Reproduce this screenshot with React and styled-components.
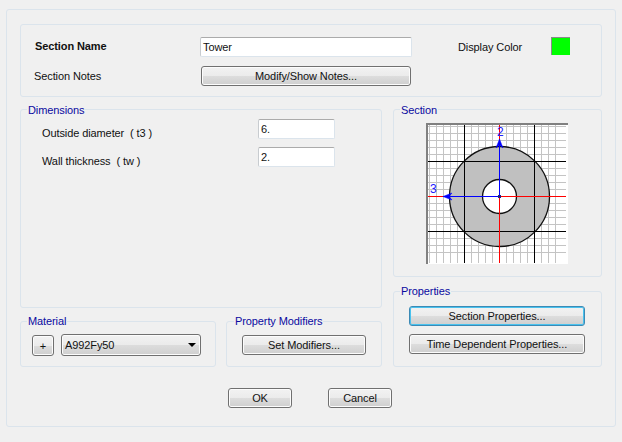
import styled, { createGlobalStyle } from "styled-components";

const Global = createGlobalStyle`
  html, body { margin: 0; padding: 0; background: #f0f0f0; }
  body { font-family: "Liberation Sans", Arial, sans-serif; font-size: 11px; letter-spacing: -0.1px; color: #111; }
`;

const Dialog = styled.div`
  width: 622px;
  height: 442px;
  box-sizing: border-box;
  padding: 9px 6px 15px 6px;
`;

const Frame = styled.div`
  height: 100%;
  box-sizing: border-box;
  border: 1px solid #dbe4ec;
  border-radius: 3px;
  padding: 14px 13px 0;
`;

const Group = styled.div`
  position: relative;
  box-sizing: border-box;
  border: 1px solid #dbe4ec;
  border-radius: 3px;
  height: ${(p) => p.$h}px;
  width: ${(p) => (p.$w ? `${p.$w}px` : "auto")};
`;

const Legend = styled.span`
  position: absolute;
  top: ${(p) => p.$top || -8}px;
  left: ${(p) => p.$left || 6}px;
  padding: 0 1px;
  background: #f0f0f0;
  color: #0a0aa0;
  line-height: 14px;
`;

const TopGroup = styled(Group)`
  display: grid;
  grid-template-columns: 166px 211px 1fr;
  grid-template-rows: 20px 20px;
  row-gap: 9px;
  align-items: center;
  padding: 12px 0 0 13px;
`;

const NameLabel = styled.label`
  font-weight: bold;
  padding-left: 1px;
  margin-bottom: 2px;
`;

const TextBox = styled.div`
  box-sizing: border-box;
  height: 20px;
  width: ${(p) => (p.$w ? `${p.$w}px` : "100%")};
  background: #fff;
  border: 1px solid #dbe4ec;
  border-top-color: #ababab;
  border-left-color: #c8ccd0;
  border-radius: 2px;
  padding: 0 2px;
  line-height: 18px;
`;

const ColorRow = styled.div`
  display: flex;
  align-items: center;
  padding-left: 47px;
  gap: 29px;
`;

const Swatch = styled.div`
  box-sizing: border-box;
  width: 19px;
  height: 18px;
  margin-bottom: 3px;
  background: #00ff00;
  border: 1px solid #8a8a8a;
  border-right: 0;
  border-bottom: 0;
`;

const Button = styled.button`
  box-sizing: border-box;
  width: ${(p) => (p.$w ? `${p.$w}px` : "100%")};
  height: ${(p) => p.$h || 20}px;
  padding: 0;
  font: inherit;
  letter-spacing: inherit;
  color: #111;
  border: 1px solid ${(p) => (p.$focus ? "#3c8ab5" : "#707070")};
  border-radius: 3px;
  box-shadow: inset 0 0 0 1px ${(p) => (p.$focus ? "#49c2ee" : "#fcfcfc")};
  background: linear-gradient(#f2f2f2 0%, #ebebeb 50%, #dddddd 50%, #cfcfcf 100%);
`;

const NotesButton = styled(Button)`
  margin-left: 1px;
`;

const Body = styled.div`
  display: grid;
  grid-template-columns: 362px 209px;
  column-gap: 11px;
  margin-top: 12px;
`;

const Column = styled.div`
  display: flex;
  flex-direction: column;
  gap: ${(p) => p.$gap}px;
`;

const DimGrid = styled.div`
  display: grid;
  grid-template-columns: 216px 77px;
  grid-auto-rows: 20px;
  row-gap: 8px;
  align-items: center;
  padding: 9px 0 0 21px;
`;

const DimLabel = styled.span`
  white-space: pre;
  margin-top: 7px;
`;

const BottomRow = styled.div`
  display: flex;
  gap: 10px;
`;

const MaterialBody = styled.div`
  display: flex;
  align-items: flex-end;
  gap: 7px;
  padding: 12px 0 0 11px;
`;

const Select = styled(Button)`
  display: flex;
  align-items: center;
  justify-content: space-between;
  padding: 0 4px 0 3px;
  height: 22px;
`;

const Caret = styled.span`
  width: 0;
  height: 0;
  border-left: 4px solid transparent;
  border-right: 4px solid transparent;
  border-top: 4px solid #000;
`;

const ModifierBody = styled.div`
  padding: 13px 0 0 15px;
`;

const PropBody = styled.div`
  display: flex;
  flex-direction: column;
  gap: 8px;
  padding: 14px 16px 0 15px;
`;

const SectionBody = styled.div`
  padding: 13px 0 0 32px;
`;

const Actions = styled.div`
  display: flex;
  gap: 36px;
  margin: 21px 0 0 208px;
`;

const minor = Array.from({ length: 19 }, (_, i) => 3 + i * 7);
const major = [38, 108];

function SectionDrawing() {
  return (
    <svg width="142" height="141" viewBox="0 0 142 141" style={{ display: "block" }} shapeRendering="crispEdges">
      <rect width="142" height="141" fill="#fff" />
      {minor.map((v) => (
        <g key={v} stroke="#c4c4c4">
          <line x1={v + 0.5} y1="2" x2={v + 0.5} y2="140" />
          <line x1="2" y1={v + 0.5} x2="140" y2={v + 0.5} />
        </g>
      ))}
      <g shapeRendering="auto" stroke="#111" strokeWidth="1.3">
        <circle cx="73.5" cy="73.5" r="50" fill="#c0c0c0" />
        <circle cx="73.5" cy="73.5" r="17" fill="#fff" />
      </g>
      <g stroke="#000">
        {major.map((v) => (
          <g key={v}>
            <line x1={v + 0.5} y1="2" x2={v + 0.5} y2="140" />
            <line x1="2" y1={v + 0.5} x2="140" y2={v + 0.5} />
          </g>
        ))}
      </g>
      <g stroke="#ff0000">
        <line x1="73.5" y1="2" x2="73.5" y2="140" />
        <line x1="2" y1="73.5" x2="140" y2="73.5" />
      </g>
      <g stroke="#0000ff">
        <line x1="73.5" y1="73" x2="73.5" y2="16" />
        <line x1="73" y1="73.5" x2="17" y2="73.5" />
      </g>
      <path d="M70 25 L73.5 16 L77 25 L73.5 22 Z M26 70 L17 73.5 L26 77 L23 73.5 Z" fill="#0000ff" stroke="#0000ff" strokeWidth="0.5" shapeRendering="auto" />
      <rect x="72" y="72" width="3" height="3" fill="#202080" />
      <text x="71" y="13" fill="#2020ff" fontSize="12" fontFamily="Liberation Sans">2</text>
      <text x="4" y="70" fill="#2020ff" fontSize="12" fontFamily="Liberation Sans">3</text>
      <rect x="0" y="0" width="142" height="2" fill="#808080" />
      <rect x="0" y="0" width="2" height="141" fill="#808080" />
    </svg>
  );
}

export default function App() {
  return (
    <Dialog>
      <Global />
      <Frame>
        <TopGroup $h={73}>
          <NameLabel>Section Name</NameLabel>
          <TextBox $w={212}>Tower</TextBox>
          <ColorRow>
            <span>Display Color</span>
            <Swatch />
          </ColorRow>
          <span>Section Notes</span>
          <NotesButton $w={210}>Modify/Show Notes...</NotesButton>
        </TopGroup>
        <Body>
          <Column $gap={13}>
            <Group $h={199}>
              <Legend $top={-7}>Dimensions</Legend>
              <DimGrid>
                <DimLabel>Outside diameter  ( t3 )</DimLabel>
                <TextBox>6.</TextBox>
                <DimLabel>Wall thickness  ( tw )</DimLabel>
                <TextBox>2.</TextBox>
              </DimGrid>
            </Group>
            <BottomRow>
              <Group $w={196} $h={46}>
                <Legend>Material</Legend>
                <MaterialBody>
                  <Button $w={22} $h={21}>+</Button>
                  <Select $w={140} as="div">
                    <span>A992Fy50</span>
                    <Caret />
                  </Select>
                </MaterialBody>
              </Group>
              <Group $w={156} $h={46}>
                <Legend $left={7}>Property Modifiers</Legend>
                <ModifierBody>
                  <Button $w={124}>Set Modifiers...</Button>
                </ModifierBody>
              </Group>
            </BottomRow>
          </Column>
          <Column $gap={14}>
            <Group $h={168}>
              <Legend $top={-7}>Section</Legend>
              <SectionBody>
                <SectionDrawing />
              </SectionBody>
            </Group>
            <Group $h={76}>
              <Legend>Properties</Legend>
              <PropBody>
                <Button $focus>Section Properties...</Button>
                <Button>Time Dependent Properties...</Button>
              </PropBody>
            </Group>
          </Column>
        </Body>
        <Actions>
          <Button $w={64}>OK</Button>
          <Button $w={64}>Cancel</Button>
        </Actions>
      </Frame>
    </Dialog>
  );
}
